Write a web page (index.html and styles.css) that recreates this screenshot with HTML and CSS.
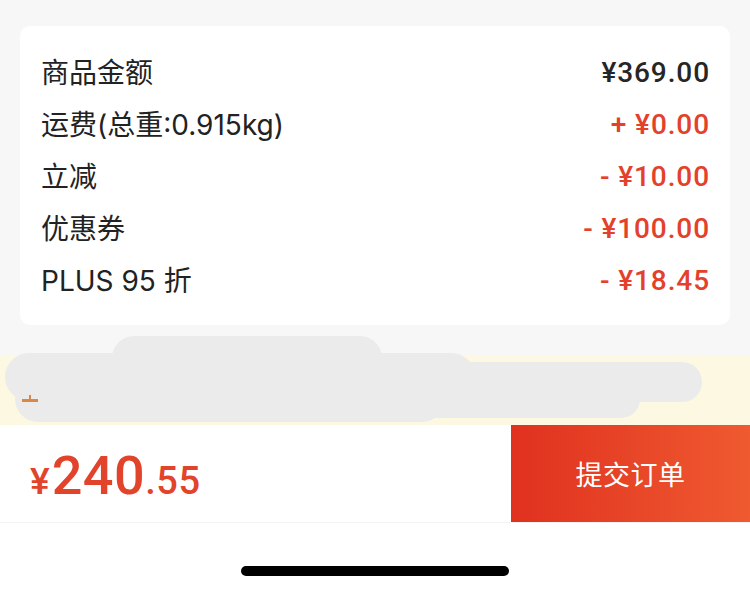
FILE: index.html
```html
<!DOCTYPE html>
<html lang="zh-CN">
<head>
<meta charset="utf-8">
<link rel="stylesheet" href="styles.css">
</head>
<body>
<div class="page">
  <div class="top-gap"></div>
  <section class="card">
    <div class="row"><span class="label">商品金额</span><span class="val dark">¥369.00</span></div>
    <div class="row"><span class="label">运费(总重:0.915kg)</span><span class="val red">+ ¥0.00</span></div>
    <div class="row"><span class="label">立减</span><span class="val red">- ¥10.00</span></div>
    <div class="row"><span class="label">优惠券</span><span class="val red">- ¥100.00</span></div>
    <div class="row"><span class="label">PLUS 95 折</span><span class="val red">- ¥18.45</span></div>
  </section>
  <div class="mid-gap"></div>
  <section class="banner">
    <span class="mark"></span>
    <span class="blob b1"></span>
    <span class="blob b2"></span>
    <span class="blob b3"></span>
    <span class="blob b4"></span>
    <span class="blob b5"></span>
  </section>
  <section class="bar">
    <div class="total"><span class="yen">¥</span><span class="int">240</span><span class="dec">.55</span></div>
    <button class="submit">提交订单</button>
  </section>
  <footer class="safe"><span class="home"></span></footer>
</div>
</body>
</html>
```

FILE: styles.css
```css
* { box-sizing: border-box; margin: 0; padding: 0; }
html, body { width: 750px; height: 592px; overflow: hidden; }
body { background: #f7f7f7; font-family: "Noto Sans CJK SC", "Noto Sans", sans-serif; }
.page { display: flex; flex-direction: column; width: 750px; height: 592px; }
.top-gap { height: 26px; flex: none; }
.card {
  margin: 0 20px;
  background: #fff;
  border-radius: 10px;
  padding: 21px 20px 17px 21px;
  display: flex;
  flex-direction: column;
  height: 299px;
}
.row { height: 52px; display: flex; align-items: center; justify-content: space-between; }
.label { font-family: "Inter", "Noto Sans CJK SC", sans-serif; font-size: 28px; color: #222; line-height: 1; }
.val { font-family: "Roboto", "Noto Sans", sans-serif; font-weight: 500; font-size: 28px; line-height: 1; letter-spacing: 0.9px; }
.dark { color: #262626; }
.red { color: #e3412b; }
.mid-gap { height: 31px; flex: none; }
.banner { position: relative; height: 69px; background: #fcf8e2; flex: none; }
.blob { position: absolute; background: #ebebeb; border-radius: 24px; }
.b1 { left: 112px; top: -20px; width: 270px; height: 44px; }
.b2 { left: 5px; top: -3px; width: 470px; height: 48px; }
.b3 { left: 250px; top: 6px; width: 452px; height: 40px; border-radius: 20px; }
.b4 { left: 15px; top: 20px; width: 430px; height: 46px; }
.b5 { left: 300px; top: 24px; width: 340px; height: 38px; border-radius: 19px; }
.mark { position: absolute; left: 22px; top: 43px; width: 16px; height: 3px; background: #d9874a; z-index: 2; }
.mark::after { content: ""; position: absolute; left: 7px; top: -4px; width: 2px; height: 5px; background: #d9874a; }
.bar { height: 97px; background: #fff; display: flex; align-items: stretch; flex: none; }
.total { flex: 1; display: flex; align-items: baseline; padding-left: 30px; padding-top: 24px; color: #e2432b; font-family: "Roboto", "Noto Sans", sans-serif; font-weight: 500; line-height: 1; }
.yen { font-size: 37px; font-weight: 500; margin-right: 2px; }
.int { font-size: 54px; letter-spacing: 0.5px; }
.dec { font-size: 38px; letter-spacing: 0.5px; }
.submit {
  width: 239px;
  border: 0;
  background: linear-gradient(90deg, #e0311f, #ef5a30);
  color: #fff;
  font-family: "Noto Sans CJK SC", sans-serif;
  font-size: 27px;
  letter-spacing: 0.5px;
}
.safe { flex: 1; background: #fff; border-top: 1px solid #f3f3f3; display: flex; justify-content: center; padding-top: 43px; }
.home { width: 268px; height: 10px; border-radius: 5px; background: #000; }
```
